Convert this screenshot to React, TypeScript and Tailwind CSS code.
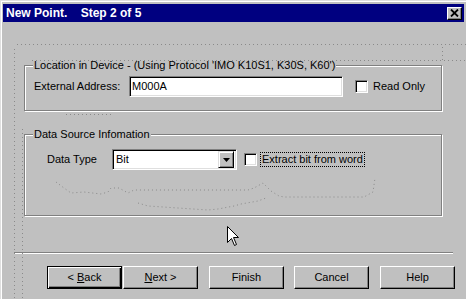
import React from "react";

const font = { fontFamily: '"Liberation Sans", Arial, sans-serif' };

function Sunken({ className = "", children }: { className?: string; children?: React.ReactNode }) {
  return (
    <div
      className={`border border-t-[#808080] border-l-[#808080] border-r-white border-b-white shadow-[inset_1px_1px_0_#000,inset_-1px_-1px_0_#dfdfdf] bg-white ${className}`}
    >
      {children}
    </div>
  );
}

function Check() {
  return <Sunken className="w-[13px] h-[13px] shrink-0" />;
}

function Btn({ children, isDefault = false, className = "" }: { children: React.ReactNode; isDefault?: boolean; className?: string }) {
  const look = isDefault
    ? "border border-black shadow-[inset_1px_1px_0_#fff,inset_-1px_-1px_0_#000,inset_-2px_-2px_0_#808080]"
    : "border border-t-white border-l-white border-r-black border-b-black shadow-[inset_-1px_-1px_0_#808080]";
  return (
    <div className={`w-[75px] h-[23px] flex items-center justify-center text-[11px] text-black bg-[#c0c0c0] ${look} ${className}`}>
      {children}
    </div>
  );
}

function Group({ title, className = "", children }: { title: string; className?: string; children: React.ReactNode }) {
  return (
    <div className={`relative w-[418px] border border-[#808080] shadow-[1px_1px_0_#fff,inset_1px_1px_0_#fff] ${className}`}>
      <span className="absolute -top-[8px] left-[8px] bg-[#c0c0c0] px-[1px] text-[11px] leading-[14px] text-black whitespace-nowrap">
        {title}
      </span>
      {children}
    </div>
  );
}

export default function App() {
  return (
    <div
      className="relative w-[466px] h-[299px] overflow-hidden bg-[#c0c0c0] border-t border-l border-[#dfdfdf]"
      style={font}
    >
      <div className="h-full border-t border-l border-white pt-[2px] pl-[1px] pr-[2px]">
        {/* title bar */}
        <div className="h-[18px] bg-[#000080] flex items-center justify-between pl-[3px] pr-[2px]">
          <span className="text-white font-bold text-[12px] whitespace-pre">New Point.    Step 2 of 5</span>
          <div className="w-[15px] h-[13px] bg-[#c0c0c0] border border-t-white border-l-white border-r-black border-b-black shadow-[inset_-1px_-1px_0_#808080] flex items-center justify-center">
            <svg width="9" height="8" viewBox="0 0 9 8">
              <path d="M1 0.5 L8 7.5 M8 0.5 L1 7.5" stroke="#000" strokeWidth="1.8" />
            </svg>
          </div>
        </div>

        <div className="pl-[21px]">
          {/* location group */}
          <Group title="Location in Device - (Using Protocol 'IMO K10S1, K30S, K60')" className="mt-[43px] h-[46px]">
            <div className="flex items-center pt-[10px] pl-[9px]">
              <span className="w-[95px] text-[11px] text-black">External Address:</span>
              <Sunken className="w-[214px] h-[21px] flex items-center pl-[2px]">
                <span className="text-[11px] text-black">M000A</span>
              </Sunken>
              <div className="ml-[12px] flex items-center gap-[5px]">
                <Check />
                <span className="text-[11px] text-black">Read Only</span>
              </div>
            </div>
          </Group>

          {/* data source group */}
          <Group title="Data Source Infomation" className="mt-[23px] h-[82px]">
            <div className="flex items-center pt-[14px] pl-[22px]">
              <span className="w-[65px] text-[11px] text-black">Data Type</span>
              <Sunken className="w-[125px] h-[21px] flex items-center justify-between pl-[3px] pr-[2px]">
                <span className="text-[11px] text-black">Bit</span>
                <div className="w-[16px] h-[17px] bg-[#c0c0c0] border border-t-[#dfdfdf] border-l-[#dfdfdf] border-r-black border-b-black shadow-[inset_1px_1px_0_#fff,inset_-1px_-1px_0_#808080] flex items-center justify-center">
                  <svg width="7" height="4" viewBox="0 0 7 4">
                    <path d="M0 0 H7 L3.5 4 Z" fill="#000" />
                  </svg>
                </div>
              </Sunken>
              <div className="ml-[7px] flex items-center gap-[4px]">
                <Check />
                <span className="text-[11px] text-black leading-[13px] px-[1px] outline outline-1 outline-dotted outline-black">
                  Extract bit from word
                </span>
              </div>
            </div>
          </Group>
        </div>

        {/* separator */}
        <div className="ml-[11px] mt-[36px] w-[439px] border-t border-[#808080] border-b border-b-white" />

        {/* buttons */}
        <div className="flex items-center mt-[12px] pl-[44px]">
          <Btn isDefault>
            <span>
              &lt; <u>B</u>ack
            </span>
          </Btn>
          <Btn className="ml-[1px]">
            <span>
              <u>N</u>ext &gt;
            </span>
          </Btn>
          <Btn className="ml-[11px]">Finish</Btn>
          <Btn className="ml-[10px]">Cancel</Btn>
          <Btn className="ml-[11px]">Help</Btn>
        </div>
      </div>

      {/* screenshot noise and mouse pointer */}
      <svg className="absolute inset-0 pointer-events-none" width="466" height="299" viewBox="0 0 466 299">
        <g stroke="#8a8a8a" strokeWidth="1" strokeDasharray="1 3" fill="none">
          <path d="M16 43.5 H466" />
          <path d="M31 59.5 H466" />
          <path d="M13.5 48 V299" />
          <path d="M21.5 128 V299" />
          <path d="M441.5 46 V60" />
          <path d="M55 181 L63 187 L70 192 L83 191 L100 193 L107 191 L110 187 L118 187 L127 192 L133 189 H247 L253 187 L262 182 L270 190 L278 195 L283 196 H363 L372 191 L374 177" />
          <path d="M137 202 L147 205 L207 209 L217 208 L233 205 L240 203 L257 200 L265 197" />
          <path d="M65 113.5 H110" />
        </g>
        <path
          d="M226.5 225.5 V241.5 L230.5 237.5 L233.5 244.5 L235.5 243.5 L232.5 236.5 L237.5 236.5 Z"
          fill="#fff"
          stroke="#000"
          strokeWidth="1"
        />
      </svg>
    </div>
  );
}
